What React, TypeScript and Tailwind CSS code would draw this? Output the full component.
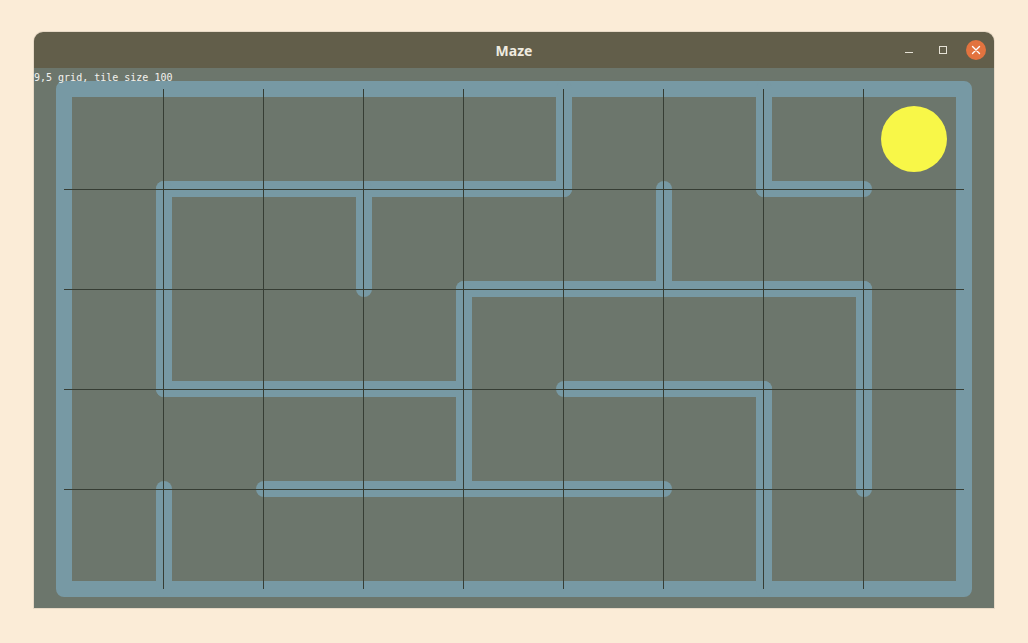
import React from "react";

const TILE = 100;
const OX = 30;
const OY = 21;
const COLS = 9;
const ROWS = 5;

// walls in grid units: [x1, y1, x2, y2]
const walls: [number, number, number, number][] = [
  [5, 0, 5, 1],
  [1, 1, 5, 1],
  [7, 0, 7, 1],
  [7, 1, 8, 1],
  [3, 1, 3, 2],
  [6, 1, 6, 2],
  [4, 2, 8, 2],
  [8, 2, 8, 4],
  [1, 1, 1, 3],
  [1, 3, 4, 3],
  [4, 2, 4, 4],
  [5, 3, 7, 3],
  [7, 3, 7, 5],
  [2, 4, 6, 4],
  [1, 4, 1, 5],
];

const px = (i: number) => OX + i * TILE;
const py = (j: number) => OY + j * TILE;

function Maze() {
  return (
    <svg width={960} height={540} viewBox="0 0 960 540" className="block">
      <rect
        x={px(0)}
        y={py(0)}
        width={COLS * TILE}
        height={ROWS * TILE}
        fill="none"
        stroke="#7799a4"
        strokeWidth={16}
        strokeLinejoin="round"
      />
      {walls.map(([x1, y1, x2, y2], k) => (
        <line
          key={k}
          x1={px(x1)}
          y1={py(y1)}
          x2={px(x2)}
          y2={py(y2)}
          stroke="#7799a4"
          strokeWidth={16}
          strokeLinecap="round"
        />
      ))}
      {Array.from({ length: COLS - 1 }, (_, i) => (
        <line
          key={"v" + i}
          x1={px(i + 1) - 0.5}
          y1={py(0)}
          x2={px(i + 1) - 0.5}
          y2={py(ROWS)}
          stroke="#363d34"
          strokeWidth={1}
        />
      ))}
      {Array.from({ length: ROWS - 1 }, (_, j) => (
        <line
          key={"h" + j}
          x1={px(0)}
          y1={py(j + 1) + 0.5}
          x2={px(COLS)}
          y2={py(j + 1) + 0.5}
          stroke="#363d34"
          strokeWidth={1}
        />
      ))}
      <circle cx={880} cy={71} r={33} fill="#f8f748" />
    </svg>
  );
}

export default function App() {
  return (
    <div className="w-[1028px] h-[643px] bg-[#fbecd7] pt-[32px] pl-[34px]">
      <div className="w-[960px] rounded-t-[9px] overflow-hidden shadow-[0_0_0_1px_rgba(0,0,0,0.08)]">
        {/* TITLE BAR */}
        <div className="relative h-[36px] bg-[#625e4a] flex items-center justify-center">
          <span className="text-[14px] font-bold text-[#efebe0] font-['Noto_Sans',sans-serif]">
            Maze
          </span>
          <div className="absolute right-[8px] top-0 h-full flex items-center">
            <div className="w-[34px] flex justify-center">
              <div className="w-[8px] h-[1px] bg-[#e6e2d6] mt-[4px]" />
            </div>
            <div className="w-[34px] flex justify-center">
              <div className="w-[8px] h-[8px] border border-[#e6e2d6]" />
            </div>
            <div className="w-[20px] h-[20px] rounded-full bg-[#e2733f] flex items-center justify-center ml-[6px]">
              <svg width="10" height="10" viewBox="0 0 10 10">
                <path d="M1.5 1.5 L8.5 8.5 M8.5 1.5 L1.5 8.5" stroke="#fff" strokeWidth="1.4" strokeLinecap="round" />
              </svg>
            </div>
          </div>
        </div>

        {/* CONTENT */}
        <div className="relative h-[540px] bg-[#6c766c]">
          <Maze />
          <div className="absolute left-0 top-[4px] text-[10px] leading-[12px] text-[#f2f2ee] font-['DejaVu_Sans_Mono',monospace] whitespace-pre">
            9,5 grid, tile size 100
          </div>
        </div>
      </div>
    </div>
  );
}
